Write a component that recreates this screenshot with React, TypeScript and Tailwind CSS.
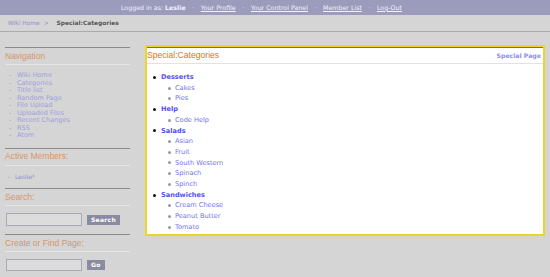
import React from 'react';

const navLinks = ['Wiki Home', 'Categories', 'Title list', 'Random Page', 'File Upload', 'Uploaded Files', 'Recent Changes', 'RSS', 'Atom'];

const categories: { name: string; pages: string[] }[] = [
  { name: 'Desserts', pages: ['Cakes', 'Pies'] },
  { name: 'Help', pages: ['Code Help'] },
  { name: 'Salads', pages: ['Asian', 'Fruit', 'South Western', 'Spinach', 'Spinch'] },
  { name: 'Sandwiches', pages: ['Cream Cheese', 'Peanut Butter', 'Tomato'] },
];

const SideSection: React.FC<{ title: string; children: React.ReactNode }> = ({ title, children }) => (
  <div className="border-t border-[#8a8a8a]">
    <div className="h-[16px] flex items-center font-['Liberation_Sans',sans-serif] text-[8.5px] text-[#d8956a]">{title}</div>
    <div className="border-t border-[#e6e6e6] pt-[7px] pb-[8px]">{children}</div>
  </div>
);

const SideInput: React.FC<{ label: string; tall?: boolean }> = ({ label, tall }) => (
  <div className="flex items-center">
    <div className={`ml-[1px] w-[76px] ${tall ? 'h-[13px]' : 'h-[12px]'} border border-[#a9a9b6] bg-[#dcdcdc]`} />
    <button className="ml-[5px] h-[10px] px-[4px] bg-[#8a8aa0] text-white font-bold text-[6px] leading-[10px] tracking-[0.3px] font-['DejaVu_Sans',sans-serif]">
      {label}
    </button>
  </div>
);

const App: React.FC = () => {
  return (
    <div className="min-h-screen w-[550px] bg-[#d5d5d5] font-['DejaVu_Sans',sans-serif]">
      {/* top bar */}
      <div className="h-[15px] bg-[#9b9bbb] flex items-center justify-center pr-[27px] gap-[6.5px] text-[6.3px] text-[#f2f2ff]">
        <span>Logged in as: <b>Leslie</b></span>
        <span>·</span>
        <span className="underline">Your Profile</span>
        <span>·</span>
        <span className="underline">Your Control Panel</span>
        <span>·</span>
        <span className="underline">Member List</span>
        <span>·</span>
        <span className="underline">Log-Out</span>
      </div>

      {/* breadcrumb */}
      <div className="h-[17px] border-b border-[#ababab] flex items-center pl-[8px] text-[5.9px]">
        <span className="text-[#8f8fcf]">Wiki Home</span>
        <span className="ml-[4px] text-[#8f8fcf]">&gt;</span>
        <span className="ml-[8px] text-[#555] font-semibold">Special:Categories</span>
      </div>

      <div className="flex items-start pt-[13px]">
        {/* sidebar */}
        <div className="w-[125px] ml-[5px] mt-[2px]">
          <SideSection title="Navigation">
            <ul className="text-[6.5px] leading-[7.5px]">
              {navLinks.map(link => (
                <li key={link} className="flex">
                  <span className="w-[12px] pl-[4px] text-[#999]">-</span>
                  <span className="text-[#9e9ee0]">{link}</span>
                </li>
              ))}
            </ul>
          </SideSection>
          <SideSection title="Active Members:">
            <div className="flex text-[6px] leading-[7.5px]">
              <span className="w-[10px] pl-[3px] text-[#999]">-</span>
              <span className="text-[#8f8fd6]">Leslie*</span>
            </div>
          </SideSection>
          <SideSection title="Search:">
            <SideInput label="Search" tall />
          </SideSection>
          <SideSection title="Create or Find Page:">
            <SideInput label="Go" />
          </SideSection>
        </div>

        {/* main panel */}
        <div className="ml-[15px] w-[400px] border-2 border-[#e8d62c] bg-white">
          <div className="border-t border-[#6f6f6f]">
            <div className="h-[16px] flex items-center justify-between pr-[2px] border-b border-[#e2e2e2]">
              <span className="font-['Liberation_Sans',sans-serif] text-[8.6px] text-[#e2702a]">Special:Categories</span>
              <span className="text-[6.2px] font-bold text-[#8d8df2]">Special Page</span>
            </div>
            <ul className="pt-[8px] pb-[1px] text-[6.6px] leading-[10.7px]">
              {categories.map(cat => (
                <li key={cat.name}>
                  <div className="flex items-center">
                    <span className="ml-[6px] w-[3px] h-[3px] rounded-full bg-[#111]" />
                    <span className="ml-[5px] font-bold text-[#5252f0]">{cat.name}</span>
                  </div>
                  {cat.pages.map(page => (
                    <div key={page} className="flex items-center">
                      <span className="ml-[21px] w-[3px] h-[3px] rounded-full bg-[#999]" />
                      <span className="ml-[4px] text-[#7272f0]">{page}</span>
                    </div>
                  ))}
                </li>
              ))}
            </ul>
          </div>
        </div>
      </div>
    </div>
  );
};

export default App;
